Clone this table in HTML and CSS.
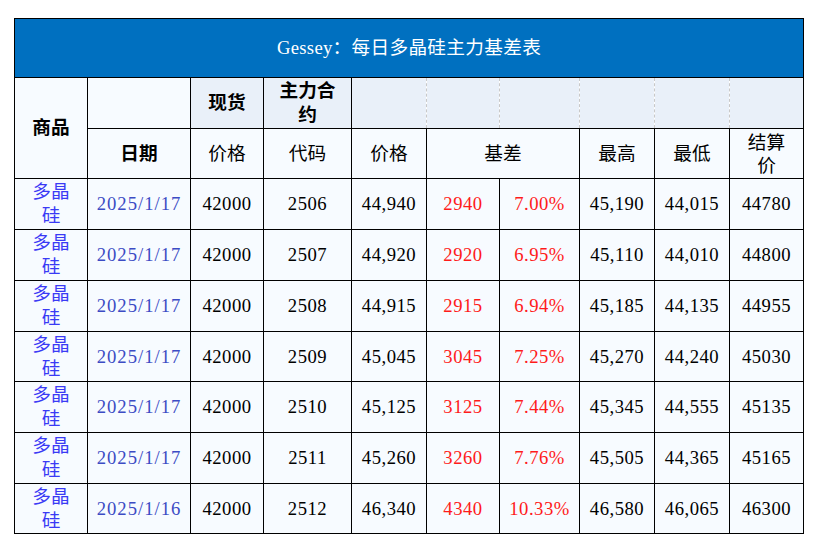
FILE: index.html
```html
<!DOCTYPE html>
<html lang="zh-CN">
<head>
<meta charset="utf-8">
<title>Gessey：每日多晶硅主力基差表</title>
<link rel="stylesheet" href="styles.css">
</head>
<body>
<table class="sheet">
  <colgroup>
    <col class="c1"><col class="c2"><col class="c3"><col class="c4"><col class="c5">
    <col class="c6"><col class="c7"><col class="c8"><col class="c9"><col class="c10">
  </colgroup>
  <tr class="r-title">
    <th colspan="10" class="title">Gessey：每日多晶硅主力基差表</th>
  </tr>
  <tr class="r-h1">
    <th rowspan="2" class="hd light b">商品</th>
    <td class="light"></td>
    <th class="hd tint b">现货</th>
    <th class="hd tint b wrap-main">主力合约</th>
    <td class="tint dash first"></td>
    <td class="tint dash"></td>
    <td class="tint dash"></td>
    <td class="tint dash"></td>
    <td class="tint dash"></td>
    <td class="tint dash last"></td>
  </tr>
  <tr class="r-h2">
    <th class="hd light b">日期</th>
    <td class="light">价格</td>
    <td class="light">代码</td>
    <td class="light">价格</td>
    <td class="light" colspan="2">基差</td>
    <td class="light">最高</td>
    <td class="light">最低</td>
    <td class="light wrap-settle">结算价</td>
  </tr>
  <tr class="r-d">
    <td class="prod">多晶硅</td><td class="date">2025/1/17</td><td>42000</td><td>2506</td><td>44,940</td>
    <td class="red">2940</td><td class="red">7.00%</td><td>45,190</td><td>44,015</td><td>44780</td>
  </tr>
  <tr class="r-d">
    <td class="prod">多晶硅</td><td class="date">2025/1/17</td><td>42000</td><td>2507</td><td>44,920</td>
    <td class="red">2920</td><td class="red">6.95%</td><td>45,110</td><td>44,010</td><td>44800</td>
  </tr>
  <tr class="r-d">
    <td class="prod">多晶硅</td><td class="date">2025/1/17</td><td>42000</td><td>2508</td><td>44,915</td>
    <td class="red">2915</td><td class="red">6.94%</td><td>45,185</td><td>44,135</td><td>44955</td>
  </tr>
  <tr class="r-d r-short">
    <td class="prod">多晶硅</td><td class="date">2025/1/17</td><td>42000</td><td>2509</td><td>45,045</td>
    <td class="red">3045</td><td class="red">7.25%</td><td>45,270</td><td>44,240</td><td>45030</td>
  </tr>
  <tr class="r-d">
    <td class="prod">多晶硅</td><td class="date">2025/1/17</td><td>42000</td><td>2510</td><td>45,125</td>
    <td class="red">3125</td><td class="red">7.44%</td><td>45,345</td><td>44,555</td><td>45135</td>
  </tr>
  <tr class="r-d">
    <td class="prod">多晶硅</td><td class="date">2025/1/17</td><td>42000</td><td>2511</td><td>45,260</td>
    <td class="red">3260</td><td class="red">7.76%</td><td>45,505</td><td>44,365</td><td>45165</td>
  </tr>
  <tr class="r-d r-short">
    <td class="prod">多晶硅</td><td class="date">2025/1/16</td><td>42000</td><td>2512</td><td>46,340</td>
    <td class="red">4340</td><td class="red">10.33%</td><td>46,580</td><td>46,065</td><td>46300</td>
  </tr>
</table>
</body>
</html>
```
FILE: styles.css
```css
html, body {
  margin: 0;
  padding: 0;
  background: #ffffff;
}

body {
  font-family: "Liberation Serif", "Noto Sans CJK SC", serif;
  font-size: 18.67px;
  color: #000000;
}

.sheet {
  margin: 18px 0 0 14px;
  width: 790px;
  table-layout: fixed;
  border-collapse: collapse;
  border: 1px solid #000000;
}

.c1 { width: 73px; }
.c2 { width: 103px; }
.c3 { width: 73px; }
.c4 { width: 88px; }
.c5 { width: 75px; }
.c6 { width: 73px; }
.c7 { width: 80px; }
.c8 { width: 75px; }
.c9 { width: 75px; }
.c10 { width: 74px; }

.sheet th,
.sheet td {
  border: 1px solid #000000;
  padding: 0 6px;
  text-align: center;
  vertical-align: middle;
  line-height: 24px;
  font-weight: normal;
  background: #f7fbff;
  overflow: hidden;
}

.r-title { height: 59px; }
.r-h1 { height: 51px; }
.r-h2 { height: 50px; }
.r-d { height: 51px; }
.r-d.r-short { height: 50px; }

.r-d td { letter-spacing: 0.5px; }

.sheet th.title {
  background: #0070c0;
  color: #ffffff;
  font-size: 18.67px;
  letter-spacing: 0.3px;
}

.sheet .b { font-weight: bold; }

.sheet .light { background: #f7fbff; }
.sheet .tint { background: #e9f0f9; }

.sheet td.dash {
  border-left: 1px dashed #c8c8c8;
  border-right: 1px dashed #c8c8c8;
}

.sheet td.dash.last {
  border-right: 1px solid #000000;
}

.sheet .wrap-main { padding: 0 8px; }
.sheet .wrap-settle {
  padding: 0 12px;
  line-height: 23px;
}

.sheet .prod {
  padding: 0 14px;
  color: #3a3af5;
  letter-spacing: 0;
}

.sheet .date {
  color: #3c4bc4;
  letter-spacing: 1px;
}

.sheet .red { color: #ff1a1a; }
```
